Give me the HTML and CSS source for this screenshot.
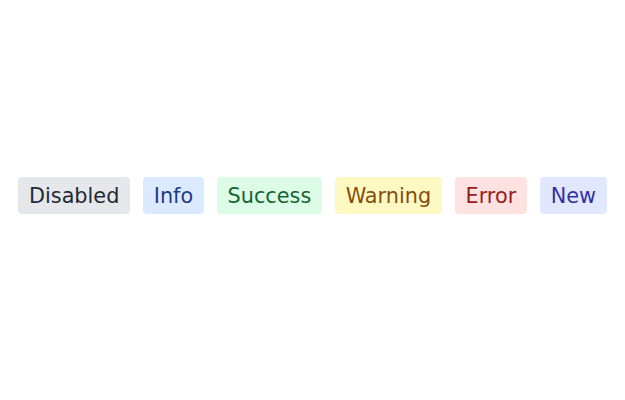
FILE: index.html
```html
<!DOCTYPE html>
<html>
<head>
<meta charset="utf-8">
<link rel="stylesheet" href="styles.css">
</head>
<body>
<div class="page">
  <div class="row">
    <span class="badge gray">Disabled</span>
    <span class="badge blue">Info</span>
    <span class="badge green">Success</span>
    <span class="badge yellow">Warning</span>
    <span class="badge red">Error</span>
    <span class="badge indigo">New</span>
  </div>
</div>
</body>
</html>
```
FILE: styles.css
```css
html, body { margin: 0; padding: 0; background: #ffffff; }
.page {
  width: 625px;
  height: 390px;
  display: flex;
  align-items: center;
  justify-content: center;
}
.row { display: flex; gap: 12.4px; }
.badge {
  font-family: "DejaVu Sans", sans-serif;
  font-size: 20.8px;
  height: 37px;
  line-height: 36px;
  padding: 1px 11px 0;
  border-radius: 4px;
  box-sizing: border-box;
}
.gray { background: #e5e7eb; color: #1f2937; }
.blue { background: #dbeafe; color: #1e3a8a; }
.green { background: #dcfce7; color: #166534; }
.yellow { background: #fef9c3; color: #854d0e; }
.red { background: #fee2e2; color: #991b1b; }
.indigo { background: #e0e7ff; color: #3730a3; }
```
